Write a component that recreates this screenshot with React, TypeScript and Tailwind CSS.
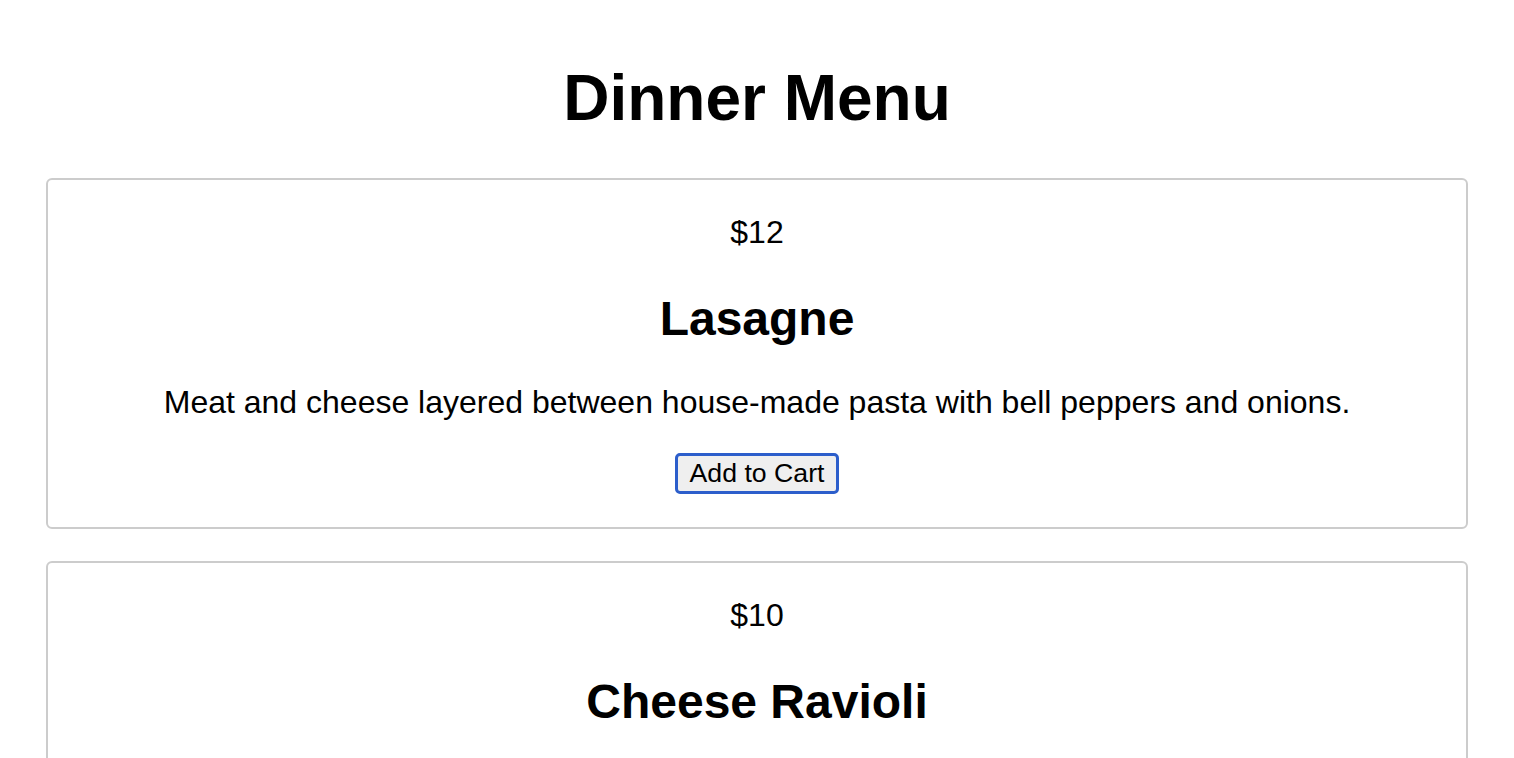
const items = [
  {
    price: "$12",
    name: "Lasagne",
    description: "Meat and cheese layered between house-made pasta with bell peppers and onions.",
  },
  {
    price: "$10",
    name: "Cheese Ravioli",
    description: "House-made ravioli stuffed with ricotta and parmesan in a light tomato sauce.",
  },
];

function MenuItem({
  price,
  name,
  description,
  focused,
}: {
  price: string;
  name: string;
  description: string;
  focused?: boolean;
}) {
  return (
    <div className="mx-[46px] flex flex-col items-center rounded-[6px] border-2 border-[#cccccc] px-4 pt-[34px] pb-[33px] text-center">
      <p className="text-[32px] leading-[37px]">{price}</p>
      <h2 className="mt-[40px] text-[48px] font-bold leading-[55px]">{name}</h2>
      <p className="mt-[38px] text-[32px] leading-[37px]">{description}</p>
      <button
        className={
          focused
            ? "mt-[32px] h-[41px] rounded-[5px] border-[3px] border-[#2c5ecb] bg-[#efefef] px-[12px] text-[26.67px] leading-[31px]"
            : "mt-[32px] h-[41px] rounded-[5px] border-2 border-[#767676] bg-[#efefef] px-[12px] text-[26.67px] leading-[31px]"
        }
      >
        Add to Cart
      </button>
    </div>
  );
}

export default function App() {
  return (
    <div className="min-h-screen bg-white pt-[61px] pb-10 text-black [font-family:'Liberation_Sans',Arial,sans-serif]">
      <h1 className="text-center text-[64px] font-bold leading-[74px]">Dinner Menu</h1>
      <div className="mt-[43px] flex flex-col gap-[32px]">
        {items.map((item, i) => (
          <MenuItem key={item.name} {...item} focused={i === 0} />
        ))}
      </div>
    </div>
  );
}
